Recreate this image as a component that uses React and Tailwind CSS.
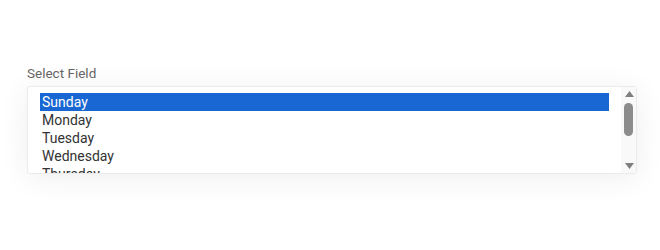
import React from "react";

const days = ["Sunday", "Monday", "Tuesday", "Wednesday", "Thursday", "Friday", "Saturday"];

export default function App() {
  return (
    <div className="w-[660px] h-[250px] bg-white pt-[64px] pl-[27px]" style={{ fontFamily: "Roboto, 'Noto Sans', sans-serif" }}>
      <label className="block text-[13.5px] leading-[18px] text-[#666] mb-[4px]">Select Field</label>
      <div className="flex w-[610px] h-[88px] rounded-[3px] border border-[#ebebeb] bg-white shadow-[0_4px_30px_rgba(0,0,0,0.07)] overflow-hidden">
        <div className="flex-1 overflow-hidden pl-[12px] pr-[12px] pt-[6px]">
          {days.map((d, i) => (
            <div
              key={d}
              className={
                "h-[18px] px-[2px] text-[14px] leading-[18px] whitespace-nowrap " +
                (i === 0 ? "bg-[#1967d2] text-white" : "text-[#333]")
              }
            >
              {d}
            </div>
          ))}
        </div>
        <div className="w-[15px] shrink-0 bg-[#f9f9f9] flex flex-col items-center pt-[4px] pb-[3px]">
          <svg width="9" height="6" viewBox="0 0 9 6" className="ml-[1px]">
            <polygon points="4.5,0 9,6 0,6" fill="#7f7f7f" />
          </svg>
          <div className="mt-[6px] w-[9px] h-[33px] rounded-full bg-[#8c8c8c]" />
          <div className="flex-1" />
          <svg width="9" height="6" viewBox="0 0 9 6" className="ml-[1px] mb-[1px]">
            <polygon points="0,0 9,0 4.5,6" fill="#7f7f7f" />
          </svg>
        </div>
      </div>
    </div>
  );
}
